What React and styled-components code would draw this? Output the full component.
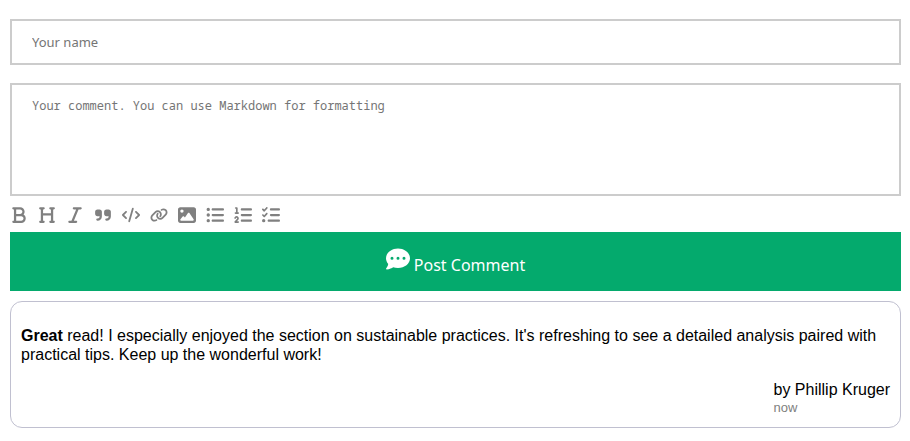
import React from "react";
import styled, { createGlobalStyle } from "styled-components";
import {
  FaBold,
  FaHeading,
  FaItalic,
  FaQuoteRight,
  FaCode,
  FaLink,
  FaImage,
  FaListUl,
  FaListOl,
  FaListCheck,
  FaCommentDots,
} from "react-icons/fa6";

const GlobalStyle = createGlobalStyle`
  *, *::before, *::after {
    box-sizing: border-box;
  }

  body {
    margin: 0;
    background: #ffffff;
    color: #000000;
    font-family: Helvetica, "Liberation Sans", Arial, sans-serif;
    font-size: 16px;
  }
`;

const Page = styled.main`
  padding: 19px 9px 12px 10px;
`;

const Form = styled.form`
  display: flex;
  flex-direction: column;
`;

const NameInput = styled.input`
  width: 100%;
  padding: 12px 20px;
  border: 2px solid #cccccc;
  border-radius: 0;
  background: #ffffff;
  color: #000000;
  font-family: "Noto Sans", sans-serif;
  font-size: 13px;
  line-height: 18px;
  outline: none;

  &::placeholder {
    color: #757575;
    opacity: 1;
  }
`;

const CommentInput = styled.textarea`
  display: block;
  width: 100%;
  height: 113px;
  margin-top: 18px;
  padding: 12px 20px;
  border: 2px solid #cccccc;
  border-radius: 0;
  background: #ffffff;
  color: #000000;
  font-family: "Noto Sans Mono", "DejaVu Sans Mono", monospace;
  font-size: 12px;
  line-height: 18px;
  resize: none;
  outline: none;

  &::placeholder {
    color: #757575;
    opacity: 1;
  }
`;

const Toolbar = styled.div`
  display: flex;
  gap: 10px;
  padding: 10px 0 8px;
`;

const ToolButton = styled.button`
  display: flex;
  padding: 0;
  border: 0;
  background: none;
  color: #808080;
  cursor: pointer;

  svg {
    width: 18px;
    height: 18px;
  }
`;

const PostButton = styled.button`
  display: flex;
  align-items: flex-start;
  justify-content: center;
  gap: 4px;
  width: 100%;
  padding: 15px 20px 14px;
  border: 0;
  background: #04aa6d;
  color: #ffffff;
  font-family: "Noto Sans", sans-serif;
  font-size: 16px;
  line-height: 22px;
  cursor: pointer;

  svg {
    width: 24px;
    height: 24px;
  }
`;

const PostLabel = styled.span`
  padding: 7px 0 1px;
`;

const Comment = styled.article`
  display: flex;
  flex-direction: column;
  margin-top: 10px;
  padding: 24px 10px 11px;
  border: 1px solid #c0c0d0;
  border-radius: 12px;
`;

const CommentText = styled.p`
  margin: 0 0 16px;
  line-height: 19px;
`;

const Byline = styled.footer`
  display: flex;
  flex-direction: column;
  align-self: flex-end;
  line-height: 19px;
`;

const PostedAt = styled.time`
  color: #808080;
  font-size: 13px;
  line-height: 17px;
`;

const tools = [
  ["Bold", FaBold],
  ["Heading", FaHeading],
  ["Italic", FaItalic],
  ["Quote", FaQuoteRight],
  ["Code", FaCode],
  ["Link", FaLink],
  ["Image", FaImage],
  ["Bulleted list", FaListUl],
  ["Numbered list", FaListOl],
  ["Task list", FaListCheck],
];

export default function App() {
  return (
    <>
      <GlobalStyle />
      <Page>
        <Form onSubmit={(event) => event.preventDefault()}>
          <NameInput type="text" aria-label="Your name" placeholder="Your name" />
          <CommentInput
            aria-label="Your comment"
            placeholder="Your comment. You can use Markdown for formatting"
          />
          <Toolbar role="toolbar" aria-label="Formatting">
            {tools.map(([label, Icon]) => (
              <ToolButton key={label} type="button" aria-label={label}>
                <Icon />
              </ToolButton>
            ))}
          </Toolbar>
          <PostButton type="submit">
            <FaCommentDots />
            <PostLabel>Post Comment</PostLabel>
          </PostButton>
        </Form>
        <Comment>
          <CommentText>
            <strong>Great</strong> read! I especially enjoyed the section on
            sustainable practices. It's refreshing to see a detailed analysis
            paired with practical tips. Keep up the wonderful work!
          </CommentText>
          <Byline>
            <span>by Phillip Kruger</span>
            <PostedAt>now</PostedAt>
          </Byline>
        </Comment>
      </Page>
    </>
  );
}
